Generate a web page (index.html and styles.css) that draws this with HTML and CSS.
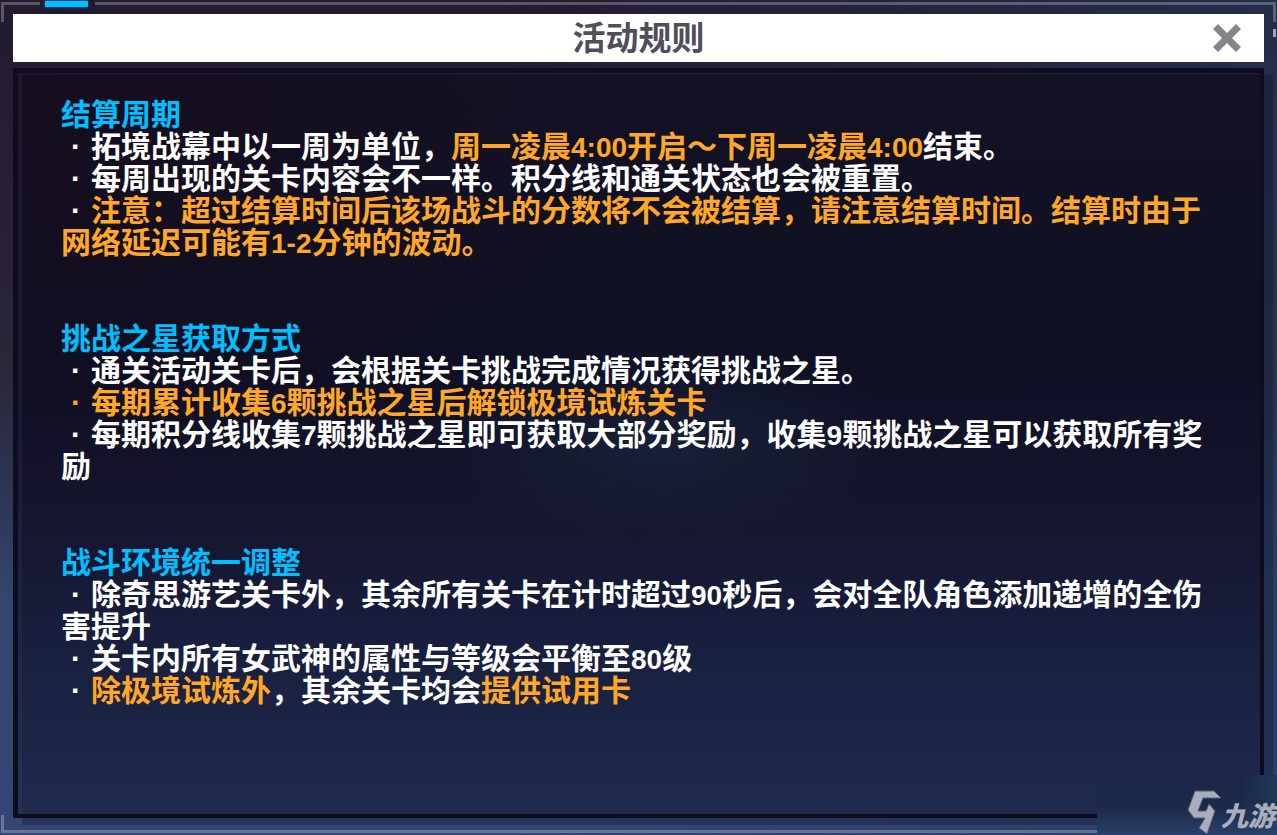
FILE: index.html
```html
<!doctype html>
<html lang="zh-CN">
<head>
    <meta charset="utf-8">
    <meta name="viewport" content="width=device-width, initial-scale=1.0">
    <title>活动规则</title>
    <link rel="stylesheet" href="styles.css">
</head>
<body>
<div class="page">

    <!--  外框装饰线  -->
    <div class="frame">
        <span class="line topLeft"></span>
        <span class="line topTab"></span>
        <span class="line topRight"></span>
        <span class="line rightMark"></span>
        <span class="line bottom"></span>
    </div>

    <!--  标题栏  -->
    <header class="titleBar">
        <h1 class="title">活动规则</h1>
        <button class="closeBtn" type="button" aria-label="关闭">
            <svg width="28" height="28" viewBox="0 0 28 28">
                <path d="M0 5L5 0L14 9L23 0L28 5L19 14L28 23L23 28L14 19L5 28L0 23L9 14Z" fill="#85838c"/>
            </svg>
        </button>
    </header>

    <!--  规则内容  -->
    <main class="rules">
        <section class="rule">
            <h2>结算周期</h2>
            <p><i class="dot">·</i>拓境战幕中以一周为单位，<em>周一凌晨<b>4:00</b>开启～下周一凌晨<b>4:00</b></em>结束。</p>
            <p><i class="dot">·</i>每周出现的关卡内容会不一样。积分线和通关状态也会被重置。</p>
            <p><i class="dot">·</i><em>注意：超过结算时间后该场战斗的分数将不会被结算，请注意结算时间。结算时由于网络延迟可能有<b>1-2</b>分钟的波动。</em></p>
        </section>
        <section class="rule">
            <h2>挑战之星获取方式</h2>
            <p><i class="dot">·</i>通关活动关卡后，会根据关卡挑战完成情况获得挑战之星。</p>
            <p><em><i class="dot">·</i>每期累计收集<b>6</b>颗挑战之星后解锁极境试炼关卡</em></p>
            <p><i class="dot">·</i>每期积分线收集<b>7</b>颗挑战之星即可获取大部分奖励，收集<b>9</b>颗挑战之星可以获取所有奖励</p>
        </section>
        <section class="rule">
            <h2>战斗环境统一调整</h2>
            <p><i class="dot">·</i>除奇思游艺关卡外，其余所有关卡在计时超过<b>90</b>秒后，会对全队角色添加递增的全伤害提升</p>
            <p><i class="dot">·</i>关卡内所有女武神的属性与等级会平衡至<b>80</b>级</p>
            <p><i class="dot">·</i><em>除极境试炼外</em>，其余关卡均会<em>提供试用卡</em></p>
        </section>
    </main>

    <!--  右下角水印  -->
    <div class="mark">
        <svg class="markLogo" width="34" height="45" viewBox="0 0 34 45">
            <path d="M8 1H27L34 8H16L11 21H19L22 14L28 21L20 44L12 38L18 28H7L1 20Z"/>
        </svg>
        <span class="markName">九游</span>
    </div>
</div>
</body>
</html>
```
FILE: styles.css
```css
* {
    margin: 0;
    padding: 0;
    box-sizing: border-box;
}

body {
    background: #221c36;
    font-family: "Noto Sans CJK SC", sans-serif;
    font-weight: bold;
}

.page {
    min-height: 100vh;
    padding: 14px 13px 17px;
    display: flex;
    flex-direction: column;
    gap: 6px;
    position: relative;
    overflow: hidden;
    background: linear-gradient(90deg, rgba(36, 58, 92, 0) 40%, rgba(36, 58, 92, .6)),
                linear-gradient(#241a30, #291f36 25%, #2a2839 45%, #2c3452 58%, #34466e 72%, #334674);
}

/* 外框 */
.frame {
    position: absolute;
    top: 0;
    right: 0;
    bottom: 0;
    left: 0;
}

.line {
    position: absolute;
    border: 0 solid rgba(255, 255, 255, .26);
}

.topLeft {
    left: 1px;
    top: 2px;
    width: 39px;
    height: 20px;
    border-width: 3px 0 0 3px;
}

.topTab {
    left: 45px;
    top: 1px;
    width: 43px;
    height: 6px;
    background: #00bfff;
    box-shadow: 0 0 3px #0080b8;
}

.topRight {
    left: 95px;
    right: 1px;
    top: 2px;
    height: 20px;
    border-width: 3px 3px 0 0;
}

.rightMark {
    right: 1px;
    top: 29px;
    width: 3px;
    height: 8px;
    background: #a2a4b2;
}

.bottom {
    left: 1px;
    right: 180px;
    bottom: 2px;
    height: 18px;
    border-width: 0 0 3px 3px;
}

/* 标题栏 */
.titleBar {
    height: 48px;
    padding: 0 22px;
    display: grid;
    grid-template-columns: 1fr auto 1fr;
    align-items: center;
    background: #fff;
    position: relative;
}

.title {
    grid-column: 2;
    font-size: 33px;
    line-height: 44px;
    padding-bottom: 4px;
    color: #504e59;
}

.closeBtn {
    justify-self: end;
    width: 30px;
    height: 30px;
    border: none;
    background: none;
    cursor: pointer;
}

.closeBtn svg {
    display: block;
    margin: 1px;
}

/* 规则面板 */
.rules {
    flex: 1;
    padding: 23px 43px 40px;
    border: solid #100c1f;
    border-width: 5px 4px 4px 5px;
    display: flex;
    flex-direction: column;
    gap: 64px;
    position: relative;
    font-size: 30px;
    line-height: 32px;
    color: #fff;
    background: radial-gradient(ellipse 240px 100px at 52% 50%, rgba(30, 48, 76, .45), rgba(30, 48, 76, 0)),
                radial-gradient(ellipse 50% 60% at 0 0, rgba(24, 8, 24, .5), rgba(24, 8, 24, 0)),
                linear-gradient(#131224, #0f1024 40%, #15152e 60%, #192040 80%, #202b4e);
    box-shadow: inset 4px 2px 0 rgba(80, 100, 160, .12), 9px 7px 0 rgba(12, 12, 36, .28);
}

.rule h2 {
    font-size: 30px;
    line-height: 32px;
    color: #00bfff;
}

.rule em {
    font-style: normal;
    color: #ffa726;
}

/* 数字 */
.rule b {
    font-family: "Liberation Sans", sans-serif;
    font-size: 28px;
    line-height: 24px;
}

.dot {
    display: inline-block;
    width: 30px;
    font-family: "Liberation Sans", sans-serif;
    font-style: normal;
    line-height: 24px;
    text-align: center;
}

/* 水印 */
.mark {
    position: absolute;
    right: 0;
    bottom: 0;
    width: 180px;
    height: 60px;
    padding-right: 2px;
    display: flex;
    justify-content: flex-end;
    align-items: flex-end;
    background: linear-gradient(90deg, rgba(36, 70, 100, 0) 80%, rgba(36, 70, 100, .5)),
                linear-gradient(#1d2749, #1c2947 50%, #29406a);
}

.markLogo {
    fill: #a9aebe;
    stroke: #555b6e;
    stroke-width: 1;
}

.markName {
    font-size: 27px;
    line-height: 40px;
    font-style: italic;
    font-weight: 900;
    color: #a9aebe;
}
```
